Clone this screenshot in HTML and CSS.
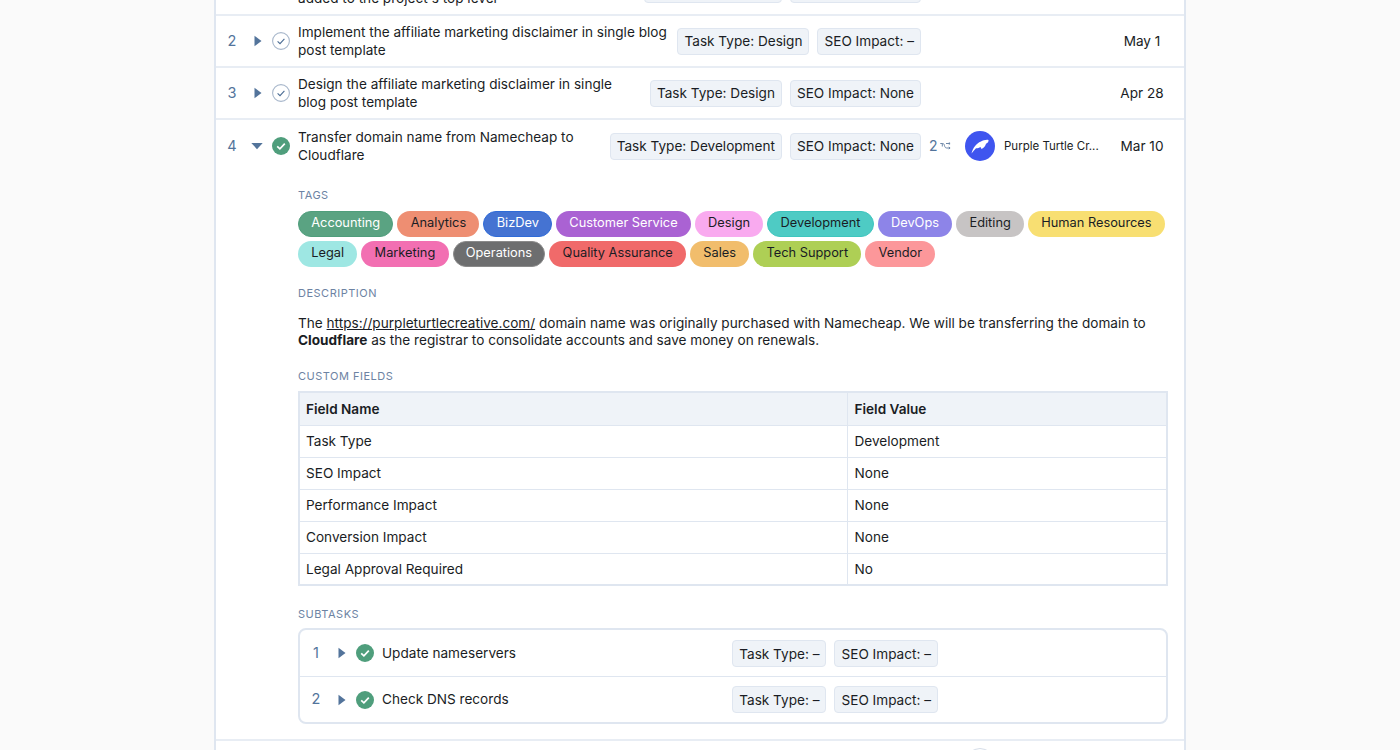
FILE: index.html
```html
<!DOCTYPE html>
<html lang="en">
<head>
    <meta charset="UTF-8">
    <title>Project Tasks</title>
    <link rel="stylesheet" href="styles.css">
</head>
<body>
    <svg class="defs" width="0" height="0">
        <symbol id="check-open" viewBox="0 0 18 18">
            <circle cx="9" cy="9" r="8.400" fill="#fff" stroke="#a9b8cc" stroke-width="1.1"/>
            <path d="M5.6 9.3l2.4 2.3 4.4-4.8" fill="none" stroke="#4a6c94" stroke-width="1.1"/>
        </symbol>
        <symbol id="check-done" viewBox="0 0 18 18">
            <circle cx="9" cy="9" r="9" fill="#4f9e7c"/>
            <path d="M5.2 9.3l2.7 2.5 4.9-5.2" fill="none" stroke="#fff" stroke-width="1.7"/>
        </symbol>
        <symbol id="caret-right" viewBox="0 0 8 12">
            <path d="M.5 .8l7 5.200-7 5.200z" fill="#53749b"/>
        </symbol>
        <symbol id="caret-down" viewBox="0 0 12 8">
            <path d="M.3 1h11.400L6 7.200z" fill="#53749b"/>
        </symbol>
    </svg>

    <main class="panel">
        <div class="task-row first-row">
            <span class="num">1</span>
            <svg class="caret"><use href="#caret-right"/></svg>
            <svg class="check"><use href="#check-open"/></svg>
            <div class="task-name">Add the affiliate marketing disclaimer page to be<br>added to the project's top level</div>
            <div class="task-tags">
                <span class="field">Task Type: Content</span>
                <span class="field">SEO Impact: None</span>
            </div>
            <div class="task-subs"></div>
            <div class="task-assignee"></div>
            <div class="task-date"></div>
        </div>

        <div class="task-row">
            <span class="num">2</span>
            <svg class="caret"><use href="#caret-right"/></svg>
            <svg class="check"><use href="#check-open"/></svg>
            <div class="task-name">Implement the affiliate marketing disclaimer in single blog post template</div>
            <div class="task-tags">
                <span class="field">Task Type: Design</span>
                <span class="field">SEO Impact: –</span>
            </div>
            <div class="task-subs"></div>
            <div class="task-assignee"></div>
            <div class="task-date">May 1</div>
        </div>

        <div class="task-row">
            <span class="num">3</span>
            <svg class="caret"><use href="#caret-right"/></svg>
            <svg class="check"><use href="#check-open"/></svg>
            <div class="task-name">Design the affiliate marketing disclaimer in single blog post template</div>
            <div class="task-tags">
                <span class="field">Task Type: Design</span>
                <span class="field">SEO Impact: None</span>
            </div>
            <div class="task-subs"></div>
            <div class="task-assignee"></div>
            <div class="task-date">Apr 28</div>
        </div>

        <div class="task-row open-row">
            <span class="num">4</span>
            <svg class="caret-open"><use href="#caret-down"/></svg>
            <svg class="check"><use href="#check-done"/></svg>
            <div class="task-name">Transfer domain name from Namecheap to Cloudflare</div>
            <div class="task-tags">
                <span class="field">Task Type: Development</span>
                <span class="field">SEO Impact: None</span>
            </div>
            <div class="task-subs">2
                <svg class="sub-icon" viewBox="0 0 11 9"><path d="M.3 1.500h2.400c1 0 1.400.6 1.700 1.800.4 1.800 1 2.700 2.300 2.700h3M6 1.500h4M8.800.4l1.300 1.100-1.300 1.100M8.800 4.900l1.300 1.100-1.300 1.100M2.300 1.500v3" fill="none" stroke="#6d87a8" stroke-width="1"/></svg>
            </div>
            <div class="task-assignee">
                <svg class="avatar" viewBox="0 0 30 30">
                    <circle cx="15" cy="15" r="15" fill="#3f55ef"/>
                    <path d="M6.500 22.500C8 17 11 12.500 16 10.500c2-1 5-2 7.500-1.500.3 1.500-.7 3-2.500 3.800-.5 2.200-2 4.200-4.500 5.200l-1-2c-1.500 1-3.500 1.500-4.500 1.300-1.500 1.500-3 3.200-4.500 5.200z" fill="#fff"/>
                </svg>
                <span class="assignee-name">Purple Turtle Cr...</span>
            </div>
            <div class="task-date">Mar 10</div>
        </div>

        <section class="task-details">
            <h2 class="label">Tags</h2>
            <div class="tags">
                <span class="tag light-text tag-accounting">Accounting</span>
                <span class="tag tag-analytics">Analytics</span>
                <span class="tag light-text tag-bizdev">BizDev</span>
                <span class="tag light-text tag-customer">Customer Service</span>
                <span class="tag tag-design">Design</span>
                <span class="tag tag-development">Development</span>
                <span class="tag light-text tag-devops">DevOps</span>
                <span class="tag tag-editing">Editing</span>
                <span class="tag tag-hr">Human Resources</span>
                <span class="tag tag-legal">Legal</span>
                <span class="tag tag-marketing">Marketing</span>
                <span class="tag light-text tag-operations">Operations</span>
                <span class="tag tag-quality">Quality Assurance</span>
                <span class="tag tag-sales">Sales</span>
                <span class="tag tag-support">Tech Support</span>
                <span class="tag tag-vendor">Vendor</span>
            </div>

            <h2 class="label description-label">Description</h2>
            <p class="description">The <a href="#">https://purpleturtlecreative.com/</a> domain name was originally purchased with Namecheap. We will be transferring the domain to <strong>Cloudflare</strong> as the registrar to consolidate accounts and save money on renewals.</p>

            <h2 class="label fields-label">Custom Fields</h2>
            <table class="fields-table">
                <thead>
                    <tr><th>Field Name</th><th>Field Value</th></tr>
                </thead>
                <tbody>
                    <tr><td>Task Type</td><td>Development</td></tr>
                    <tr><td>SEO Impact</td><td>None</td></tr>
                    <tr><td>Performance Impact</td><td>None</td></tr>
                    <tr><td>Conversion Impact</td><td>None</td></tr>
                    <tr><td>Legal Approval Required</td><td>No</td></tr>
                </tbody>
            </table>

            <h2 class="label subtasks-label">Subtasks</h2>
            <div class="subtasks">
                <div class="subtask-row">
                    <span class="num">1</span>
                    <svg class="caret"><use href="#caret-right"/></svg>
                    <svg class="check"><use href="#check-done"/></svg>
                    <div class="task-name">Update nameservers</div>
                    <div class="task-tags">
                        <span class="field">Task Type: –</span>
                        <span class="field">SEO Impact: –</span>
                    </div>
                </div>
                <div class="subtask-row">
                    <span class="num">2</span>
                    <svg class="caret"><use href="#caret-right"/></svg>
                    <svg class="check"><use href="#check-done"/></svg>
                    <div class="task-name">Check DNS records</div>
                    <div class="task-tags">
                        <span class="field">Task Type: –</span>
                        <span class="field">SEO Impact: –</span>
                    </div>
                </div>
            </div>
        </section>

        <div class="task-row next-row">
            <div class="task-name"></div>
            <div class="task-assignee"><svg class="avatar" viewBox="0 0 30 30"><circle cx="15" cy="15" r="14.500" fill="#fff" stroke="#d5dde8"/></svg></div>
            <div class="task-date"></div>
        </div>
    </main>
</body>
</html>
```

FILE: styles.css
```css
* {
    box-sizing: border-box;
}
html, body {
    height: 750px;
    overflow: hidden;
}
body {
    margin: 0;
    background-color: #fafafa;
    color: #1a1d24;
    font-family: Inter, "Liberation Sans", sans-serif;
    font-size: 13.6px;
    line-height: 1.3;
}
.defs {
    display: block;
    height: 0;
}
.panel {
    width: 972px;
    margin: 0 auto;
    background-color: #fff;
    border-left: 2px solid #dfe6f0;
    border-right: 2px solid #dfe6f0;
}
.task-row {
    display: flex;
    align-items: center;
    height: 52px;
    padding-left: 10px;
    border-bottom: 2px solid #e8edf4;
}
.first-row {
    margin-top: -36px;
}
.open-row {
    border-bottom: none;
}
.next-row {
    height: 46px;
    border-top: 2px solid #e8edf4;
    border-bottom: none;
}
.num {
    width: 12px;
    color: #53749b;
    font-size: 14.5px;
    text-align: center;
}
.caret {
    width: 8px;
    height: 12px;
    margin-left: 16px;
}
.caret-open {
    width: 12px;
    height: 8px;
    margin-left: 13px;
    margin-right: -1px;
}
.check {
    width: 18px;
    height: 18px;
    margin-left: 10px;
    margin-right: 1px;
    flex-shrink: 0;
}
.task-name {
    flex: 1;
    min-width: 0;
    margin-top: 2px;
    margin-left: 7px;
    margin-right: 8px;
}
.task-tags {
    display: flex;
    gap: 8px;
    flex-shrink: 0;
}
.field {
    height: 27px;
    padding: 4px 6px 2px;
    white-space: nowrap;
    background-color: #eff3f8;
    border: 1px solid #dfe6f0;
    border-radius: 4px;
}
.task-subs {
    display: flex;
    align-items: center;
    gap: 2px;
    width: 44px;
    padding-left: 8px;
    color: #53749b;
    font-size: 14px;
    flex-shrink: 0;
}
.sub-icon {
    width: 11px;
    height: 9px;
}
.task-assignee {
    display: flex;
    align-items: center;
    gap: 9px;
    width: 149px;
    flex-shrink: 0;
}
.avatar {
    width: 30px;
    height: 30px;
    flex-shrink: 0;
}
.assignee-name {
    font-size: 11.5px;
    white-space: nowrap;
}
.task-date {
    width: 70px;
    margin-top: 2px;
    padding-right: 14px;
    text-align: center;
    white-space: nowrap;
    flex-shrink: 0;
}
.task-details {
    padding: 16px 16px 15px 82px;
}
.label {
    margin: 0;
    color: #6d83a3;
    font-size: 11px;
    font-weight: 400;
    line-height: 14px;
    letter-spacing: 0.5px;
    text-transform: uppercase;
}
.tags {
    display: flex;
    flex-wrap: wrap;
    gap: 4px;
    margin-top: 9px;
}
.tag {
    height: 26px;
    padding: 3px 12.25px;
    font-size: 12.8px;
    white-space: nowrap;
    border: 1px solid #fff0;
    border-radius: 13px;
}
.light-text {
    color: #fff;
}
.tag-accounting { background-color: #5aa382; border-color: #4f9e7c; }
.tag-analytics { background-color: #ee8e72; }
.tag-bizdev { background-color: #4573d2; border-color: #2f6bd8; }
.tag-customer { background-color: #aa62d3; }
.tag-design { background-color: #f9aaef; }
.tag-development { background-color: #4ecbc4; border-color: #3fc5be; }
.tag-devops { background-color: #8d84e8; }
.tag-editing { background-color: #c7c4c4; }
.tag-hr { background-color: #f8df72; }
.tag-legal { background-color: #9ee7e3; }
.tag-marketing { background-color: #f26fb2; }
.tag-operations { background-color: #6d6e6f; border-color: #8a8a8a; }
.tag-quality { background-color: #f06a6a; }
.tag-sales { background-color: #f1bd6c; }
.tag-support { background-color: #aecf55; }
.tag-vendor { background-color: #fc979a; }
.description-label {
    margin-top: 19px;
}
.description {
    margin: 14.5px 0 0;
}
.description a {
    color: inherit;
}
.fields-label {
    margin-top: 19.5px;
}
.fields-table {
    width: 100%;
    margin-top: 8px;
    border-collapse: collapse;
    border: 2px solid #dfe6f0;
    line-height: 18px;
}
.fields-table th,
.fields-table td {
    height: 32px;
    padding: 0 7px;
    text-align: left;
    border: 1px solid #dfe6f0;
}
.fields-table th {
    height: 33px;
    font-weight: 600;
    background-color: #eff3f8;
}
.fields-table th:first-child {
    width: 548px;
}
.fields-table th:first-child,
.fields-table td:first-child {
    padding-left: 6px;
}
.subtasks-label {
    margin-top: 21px;
}
.subtasks {
    margin-top: 7px;
    border: 2px solid #dfe6f0;
    border-radius: 8px;
}
.subtask-row {
    display: flex;
    align-items: center;
    height: 46px;
    padding-left: 10px;
    padding-right: 228px;
}
.subtask-row + .subtask-row {
    border-top: 1px solid #dfe6f0;
}
.subtask-row .task-name {
    margin-top: 0;
}
.subtask-row .field {
    padding-top: 5px;
}
```
